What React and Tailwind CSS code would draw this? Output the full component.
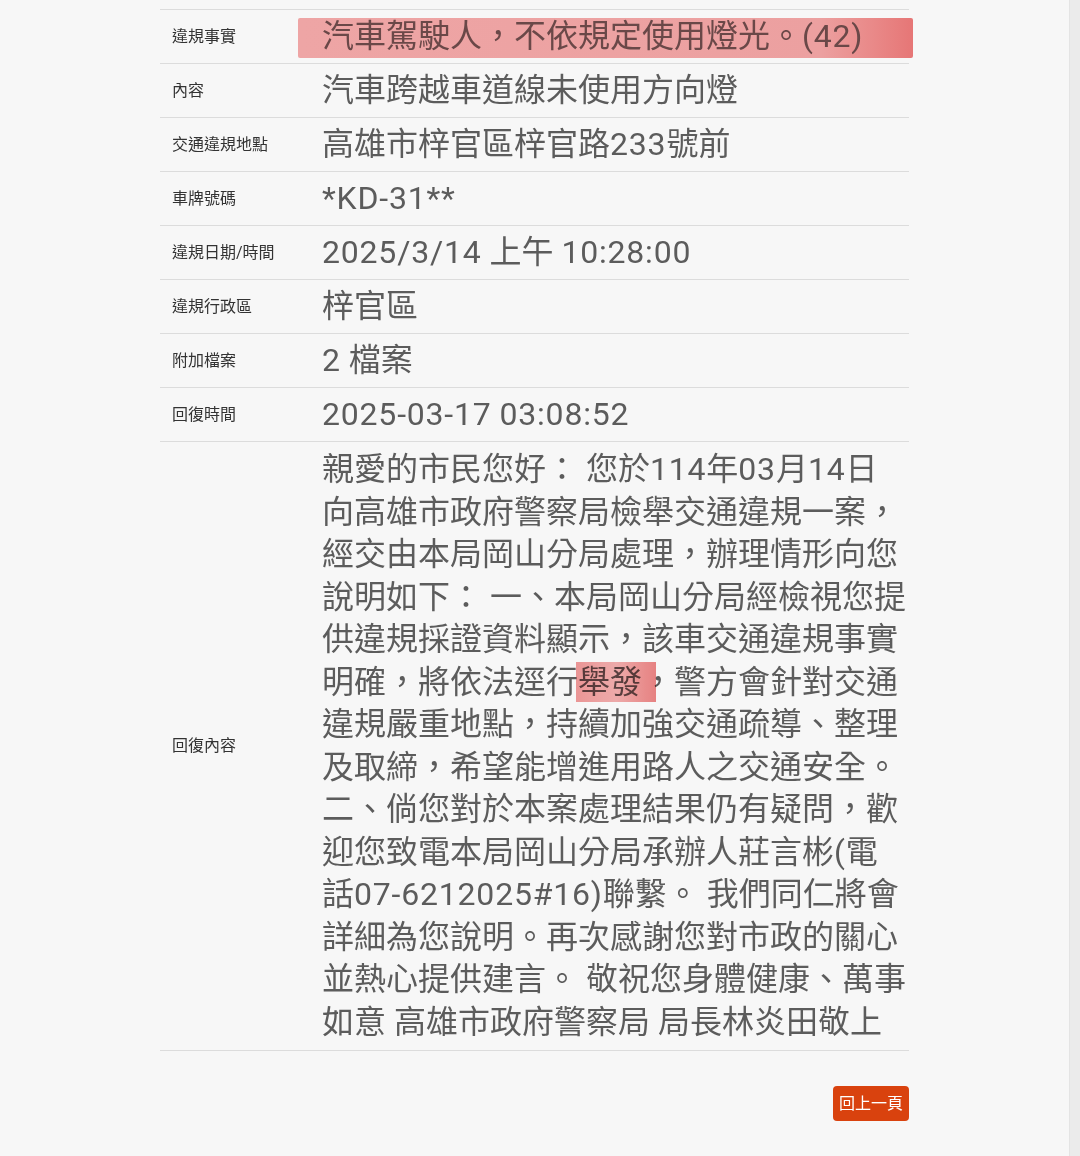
import React from 'react';

const font = { fontFamily: 'Roboto, "Noto Sans CJK TC", sans-serif' };

const rows = [
  { label: '內容', value: '汽車跨越車道線未使用方向燈' },
  { label: '交通違規地點', value: '高雄市梓官區梓官路233號前' },
  { label: '車牌號碼', value: '*KD-31**' },
  { label: '違規日期/時間', value: '2025/3/14 上午 10:28:00' },
  { label: '違規行政區', value: '梓官區' },
  { label: '附加檔案', value: '2 檔案' },
  { label: '回復時間', value: '2025-03-17 03:08:52' },
];

const replyLines = [
  '親愛的市民您好： 您於114年03月14日',
  '向高雄市政府警察局檢舉交通違規一案，',
  '經交由本局岡山分局處理，辦理情形向您',
  '說明如下： 一、本局岡山分局經檢視您提',
  '供違規採證資料顯示，該車交通違規事實',
  null,
  '違規嚴重地點，持續加強交通疏導、整理',
  '及取締，希望能增進用路人之交通安全。',
  '二、倘您對於本案處理結果仍有疑問，歡',
  '迎您致電本局岡山分局承辦人莊言彬(電',
  '話07-6212025#16)聯繫。 我們同仁將會',
  '詳細為您說明。再次感謝您對市政的關心',
  '並熱心提供建言。 敬祝您身體健康、萬事',
  '如意 高雄市政府警察局 局長林炎田敬上',
];

// latin runs are set a touch wider than the CJK glyphs
function Txt({ text }) {
  const parts = text.split(/([\x21-\x7e]+)/);
  return parts.map((p, i) =>
    /^[\x21-\x7e]+$/.test(p) ? (
      <span key={i} className="tracking-[0.8px]">{p}</span>
    ) : (
      <React.Fragment key={i}>{p}</React.Fragment>
    )
  );
}

function Row({ label, children, tall }) {
  return (
    <div className="flex border-b border-[#dcdcdc]">
      <div className="w-[150px] shrink-0 flex items-center pl-3 text-[16px] text-[#333]">{label}</div>
      <div className={`relative flex-1 pl-3 text-[32px] text-[#5c5c5c] ${tall ? 'pt-[6px] pb-[7px] leading-[42.5px]' : 'h-[53px] flex items-center pb-[2px]'}`}>
        {children}
      </div>
    </div>
  );
}

export default function App() {
  return (
    <div className="flex w-[1080px] h-[1156px] bg-[#f7f7f7] overflow-hidden" style={font}>
      <div className="flex-1 pt-[9px]">
        <div className="ml-[160px] w-[749px] border-t border-[#dcdcdc]">
          <Row label="違規事實">
            <span className="absolute left-[-12px] right-[-4px] top-[8px] h-[40px] bg-gradient-to-r from-[#f6aaaa] via-[#f4a5a5] via-85% to-[#ee7a7a] mix-blend-multiply rounded-[2px]" />
            <span className="relative text-[#6a4848]">
              <Txt text="汽車駕駛人，不依規定使用燈光。(42)" />
            </span>
          </Row>
          {rows.map((r) => (
            <Row key={r.label} label={r.label}>
              <span><Txt text={r.value} /></span>
            </Row>
          ))}
          <Row label="回復內容" tall>
            {replyLines.map((line, i) =>
              line === null ? (
                <div key={i} className="whitespace-nowrap">
                  明確，將依法逕行
                  <span className="relative">
                    <span className="absolute left-[-2px] right-[-14px] top-1/2 -translate-y-1/2 h-[40px] bg-gradient-to-r from-[#f29a9a] via-[#f5b0b0] to-[#ee8585] mix-blend-multiply" />
                    舉發
                  </span>
                  ，警方會針對交通
                </div>
              ) : (
                <div key={i} className="whitespace-nowrap"><Txt text={line} /></div>
              )
            )}
          </Row>
          <div className="flex justify-end mt-[35px]">
            <button className="bg-[#d9420e] text-white text-[16px] px-[6px] h-[35px] rounded-[4px]">回上一頁</button>
          </div>
        </div>
      </div>
      <div className="w-[11px] bg-[#ebebeb] border-l border-[#e4e4e4]" />
    </div>
  );
}
